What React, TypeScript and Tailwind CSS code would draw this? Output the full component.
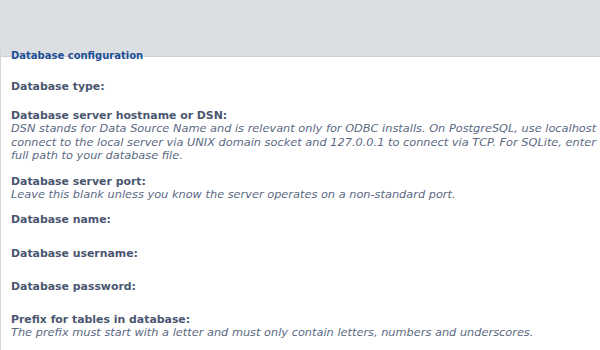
const rows: { label: string; help?: string; h: string }[] = [
  { label: 'Database type:', h: 'h-[29px]' },
  {
    label: 'Database server hostname or DSN:',
    help: 'DSN stands for Data Source Name and is relevant only for ODBC installs. On PostgreSQL, use localhost to connect to the local server via UNIX domain socket and 127.0.0.1 to connect via TCP. For SQLite, enter the full path to your database file.',
    h: 'h-[66px]',
  },
  {
    label: 'Database server port:',
    help: 'Leave this blank unless you know the server operates on a non-standard port.',
    h: 'h-[38px]',
  },
  { label: 'Database name:', h: 'h-[34px]' },
  { label: 'Database username:', h: 'h-[33px]' },
  { label: 'Database password:', h: 'h-[33px]' },
  {
    label: 'Prefix for tables in database:',
    help: 'The prefix must start with a letter and must only contain letters, numbers and underscores.',
    h: 'h-[38px]',
  },
]

export default function App() {
  return (
    <div className="w-[600px] h-[350px] overflow-hidden bg-white font-['DejaVu_Sans',Verdana,sans-serif] text-[11px] leading-[13.5px]">
      <div className="h-[57px] bg-[#dcdfe2] border-b border-[#cfd1d4]" />
      <div className="border-l border-[#d4d6d9] pl-[10px] pr-1">
        <h2 className="-mt-[8px] font-bold text-[10px] leading-[13.5px] text-[#1c4f94]">Database configuration</h2>
        <div className="mt-[17px]">
          {rows.map((r) => (
            <div key={r.label} className={r.h}>
              <p className="font-bold text-[10.9px] text-[#4a5670]">{r.label}</p>
              {r.help && <p className="italic text-[11.35px] text-[#5b6983] w-[620px]">{r.help}</p>}
            </div>
          ))}
        </div>
      </div>
    </div>
  )
}
